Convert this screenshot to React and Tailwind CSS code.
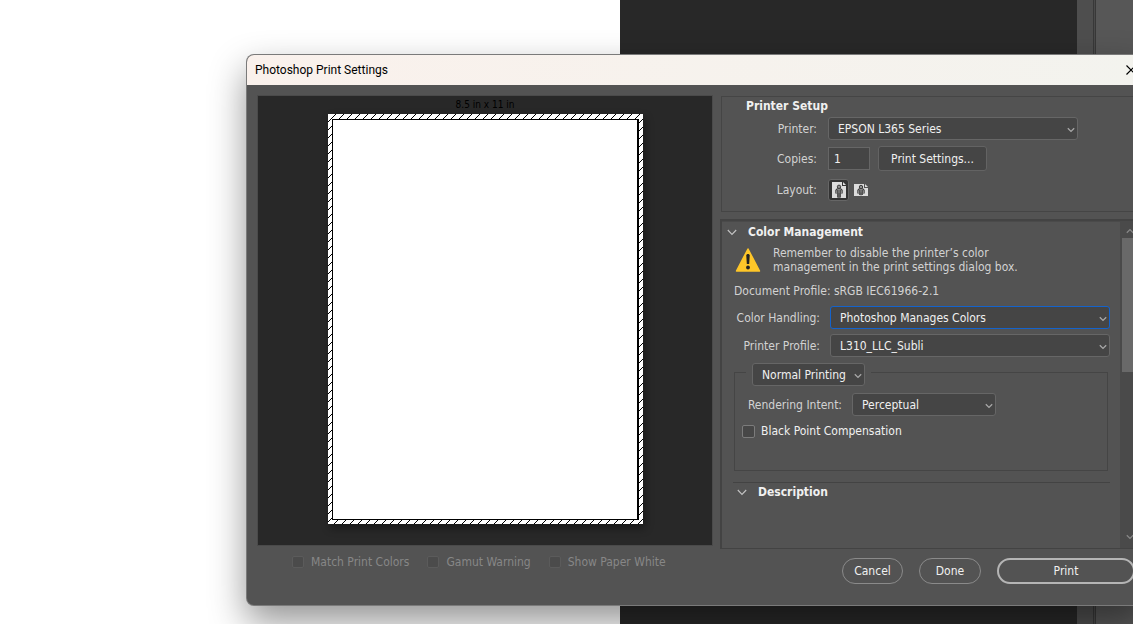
import React from "react";

const hatchPixels = [0, 1, 2, 3, 4, 5, 6, 7];

function Chevron({ className = "", up = false }) {
  return (
    <svg className={className} width="8" height="6" viewBox="0 0 8 6" fill="none" stroke="currentColor" strokeWidth="1.3" aria-hidden="true">
      <path d={up ? "M0.8 4.8 4 1.6 7.2 4.8" : "M0.8 1.2 4 4.4 7.2 1.2"} />
    </svg>
  );
}

function Select({ id, label, options, width, active = false, tight = false }) {
  return (
    <div className={`relative ${width}`}>
      <select
        id={id}
        aria-label={label}
        className={`block h-[23px] w-full appearance-none rounded-[3px] border bg-[#454545] pl-[9px] text-[#f0f0f0] outline-none ${tight ? "pr-4" : "pr-5"} ${active ? "border-[#1463cc]" : "border-[#666666]"}`}
      >
        {options.map((o) => (
          <option key={o}>{o}</option>
        ))}
      </select>
      <Chevron className="pointer-events-none absolute right-[3px] top-[10px] text-[#a8a8a8]" />
    </div>
  );
}

function Disclosure({ children }) {
  return (
    <button type="button" className="flex items-center gap-[11px] text-left font-bold text-[#f0f0f0]">
      <svg width="10" height="7" viewBox="0 0 10 7" fill="none" stroke="#c4c4c4" strokeWidth="1.1" aria-hidden="true">
        <path d="M0.8 1 5 5.4 9.2 1" />
      </svg>
      {children}
    </button>
  );
}

function CheckItem({ id, children }) {
  return (
    <label htmlFor={id} className="flex items-center gap-[7px] text-[#878787]">
      <input id={id} type="checkbox" disabled className="size-3 appearance-none rounded-[2px] border border-[#5b5b5b] bg-[#4b4b4b]" />
      {children}
    </label>
  );
}

function Portrait() {
  const body = "M4.500 11.500V8.500L5.500 7.500H8.500L9.500 8.500V11.500M6.200 8V15.500M7.800 8V15.500";
  return (
    <svg width="14" height="16" viewBox="0 0 14 16" fill="none" aria-hidden="true">
      <path d="M0 0h10v4h4v12H0z" fill="#dcdcdc" />
      <path d="M11 0l3 3h-3z" fill="#dcdcdc" />
      <path d={body} stroke="#3c3c3c" strokeWidth="2.400" />
      <circle cx="7" cy="4.800" r="1.700" fill="#909090" stroke="#3c3c3c" />
      <path d={body} stroke="#909090" strokeWidth="0.900" />
      <path d="M7 11v5" stroke="#3c3c3c" strokeWidth="0.800" />
    </svg>
  );
}

function Landscape() {
  const body = "M4.500 9.500V6.500L5.500 5.500H8.500L9.500 6.500V9.500M6.200 6V11M7.800 6V11";
  return (
    <svg width="14" height="12" viewBox="0 0 14 12" fill="none" aria-hidden="true">
      <path d="M0 0h10v4h4v8H0z" fill="#dcdcdc" />
      <path d="M11 0l3 3h-3z" fill="#dcdcdc" />
      <path d={body} stroke="#3c3c3c" strokeWidth="2.400" />
      <circle cx="7" cy="3" r="1.700" fill="#909090" stroke="#3c3c3c" />
      <path d={body} stroke="#909090" strokeWidth="0.900" />
      <path d="M7 8.500v3" stroke="#3c3c3c" strokeWidth="0.800" />
    </svg>
  );
}

function Paper() {
  return (
    <svg className="block drop-shadow-[2px_4px_4px_rgba(0,0,0,0.4)]" width="315" height="410" viewBox="0 0 315 410" role="img" aria-label="Page preview">
      <defs>
        <pattern id="hatch" width="8" height="8" patternUnits="userSpaceOnUse">
          <rect width="8" height="8" fill="#fff" />
          {hatchPixels.map((i) => (
            <rect key={i} x={i} y={7 - i} width="1" height="1" fill="#000" />
          ))}
        </pattern>
      </defs>
      <rect width="315" height="410" fill="url(#hatch)" />
      <rect x="4" y="5" width="307" height="401" fill="#000" />
      <rect x="5" y="6" width="304" height="399" fill="#fff" />
    </svg>
  );
}

export default function App() {
  return (
    <div className="relative flex min-h-screen overflow-hidden bg-white font-['DejaVu_Sans_Condensed','DejaVu_Sans',sans-serif] text-[12px] leading-[14px]">
      <div className="w-[620px] shrink-0 bg-white" />
      <div className="flex-1 bg-[#282828]" />
      <div className="w-4 bg-[#4e4e4e]" />
      <div className="w-[3px] border-x border-[#383838] bg-[#4a4a4a]" />
      <div className="w-[37px] bg-[#575757]" />

      <section
        role="dialog"
        aria-labelledby="title"
        className="absolute -right-3 left-[246px] top-[54px] overflow-hidden rounded-lg border border-[#8c8c8c]/70 bg-[#535353] text-[#d2d2d2] shadow-[0_16px_36px_rgba(0,0,0,0.42)]"
      >
        <header className="flex h-[30px] items-center justify-between bg-gradient-to-r from-[#faf1ec] to-[#f3f3ee] pl-2 pr-2 font-[Roboto,sans-serif] text-black">
          <h1 id="title">Photoshop Print Settings</h1>
          <button type="button" aria-label="Close">
            <svg width="10" height="10" viewBox="0 0 10 10" stroke="#000" strokeWidth="1.2" aria-hidden="true">
              <path d="M0.5 0.5l9 9M9.5 0.5l-9 9" />
            </svg>
          </button>
        </header>

        <div className="flex gap-[7px] pb-[21px] pl-[10px] pr-[7px] pt-[10px]">
          <div className="w-[456px] shrink-0">
            <div className="flex h-[451px] flex-col items-center border border-[#4a4a4a] bg-[#282828] pt-[2px]">
              <p className="mb-[2px] text-[10px] text-black">8.5 in x 11 in</p>
              <Paper />
            </div>
            <div className="mt-[9px] flex gap-[18px] pl-[35px]">
              <CheckItem id="match">Match Print Colors</CheckItem>
              <CheckItem id="gamut">Gamut Warning</CheckItem>
              <CheckItem id="white">Show Paper White</CheckItem>
            </div>
          </div>

          <div className="min-w-0 flex-1 pt-px">
            <div className="ml-px h-[116px] border border-[#454545] pt-[2px]">
              <h2 className="pl-6 font-bold text-[#f0f0f0]">Printer Setup</h2>
              <div className="mt-1 flex items-center gap-[11px]">
                <label htmlFor="printer" className="w-[95px] text-right">Printer:</label>
                <Select id="printer" width="w-[250px]" options={["EPSON L365 Series"]} />
              </div>
              <div className="mt-[6px] flex items-center gap-[11px]">
                <label htmlFor="copies" className="w-[95px] text-right">Copies:</label>
                <div className="flex items-center gap-2">
                  <input id="copies" defaultValue="1" className="h-[23px] w-[42px] border border-[#666666] bg-[#454545] pl-[5px] text-[#f0f0f0] outline-none" />
                  <button type="button" className="h-[25px] w-[109px] rounded-[3px] border border-[#636363] bg-[#454545] text-[#f0f0f0]">Print Settings...</button>
                </div>
              </div>
              <div className="mt-2 flex items-center gap-[11px]">
                <span className="w-[95px] text-right">Layout:</span>
                <div className="flex items-center gap-[5px]">
                  <button type="button" aria-label="Portrait" className="flex h-[22px] w-[21px] items-center justify-center rounded-[3px] border border-[#666666] bg-[#333333]"><Portrait /></button>
                  <button type="button" aria-label="Landscape"><Landscape /></button>
                </div>
              </div>
            </div>

            <div className="mt-[7px] flex h-[330px] border-b border-l-2 border-t-2 border-b-[#434343] border-l-[#434343] border-t-[#434343]">
              <div className="min-w-0 flex-1 border-t border-[#4a4a4a] pl-3 pr-[10px] pt-[3px]">
                <div className="-ml-[7px]"><Disclosure>Color Management</Disclosure></div>
                <div className="mt-[7px] flex items-center gap-3 pl-px">
                  <svg width="26" height="24" viewBox="0 0 26 24" aria-hidden="true">
                    <path d="M13 1 24.500 23H1.500z" fill="#fec629" stroke="#fec629" strokeWidth="1.500" strokeLinejoin="round" />
                    <path d="M11.300 7.500c0-2 3.400-2 3.400 0l-.5 8.500h-2.400z" fill="#222" />
                    <circle cx="13" cy="19.500" r="1.900" fill="#222" />
                  </svg>
                  <p>Remember to disable the printer’s color<br />management in the print settings dialog box.</p>
                </div>
                <p className="mt-[10px]">Document Profile: sRGB IEC61966-2.1</p>
                <div className="mt-2 flex items-center gap-[10px]">
                  <label htmlFor="handling" className="w-[86px] text-right">Color Handling:</label>
                  <Select id="handling" width="flex-1" active options={["Photoshop Manages Colors", "Printer Manages Colors"]} />
                </div>
                <div className="mt-[5px] flex items-center gap-[10px]">
                  <label htmlFor="profile" className="w-[86px] text-right">Printer Profile:</label>
                  <Select id="profile" width="flex-1" options={["L310_LLC_Subli"]} />
                </div>
                <fieldset className="mr-[2px] mt-[2px] h-[112px] border border-[#454545] pl-[7px]">
                  <legend className="ml-1 px-[6px] pt-1">
                    <Select label="Printing mode" width="w-[113px]" tight options={["Normal Printing", "Hard Proofing"]} />
                  </legend>
                  <div className="mt-[7px] flex items-center gap-[10px]">
                    <label htmlFor="intent" className="w-[100px] text-right">Rendering Intent:</label>
                    <Select id="intent" width="w-[144px]" options={["Perceptual"]} />
                  </div>
                  <label htmlFor="bpc" className="mt-2 flex items-center gap-[6px] text-[#f0f0f0]">
                    <input id="bpc" type="checkbox" className="size-[13px] appearance-none rounded-[2px] border border-[#7c7c7c] bg-[#474747]" />
                    Black Point Compensation
                  </label>
                </fieldset>
                <div className="-ml-px mt-[11px] border-t border-[#434343] pl-1 pt-[2px]">
                  <Disclosure>Description</Disclosure>
                </div>
              </div>
              <div className="flex w-[17px] flex-col items-center bg-[#4a4a4a] pb-2 pl-[2px] pt-[7px] text-[#888888]">
                <Chevron up />
                <div className="mt-1 h-[134px] w-full bg-[#696969]" />
                <Chevron className="mt-auto" />
              </div>
            </div>

            <div className="mt-[9px] flex h-[26px] gap-4 pl-[122px] pr-[2px] text-[#f0f0f0]">
              <button type="button" className="w-[61px] rounded-full border border-[#8a8a8a]">Cancel</button>
              <button type="button" className="w-[62px] rounded-full border border-[#8a8a8a]">Done</button>
              <button type="button" className="flex-1 rounded-full border-2 border-[#b5b5b5]">Print</button>
            </div>
          </div>
        </div>
      </section>
    </div>
  );
}
